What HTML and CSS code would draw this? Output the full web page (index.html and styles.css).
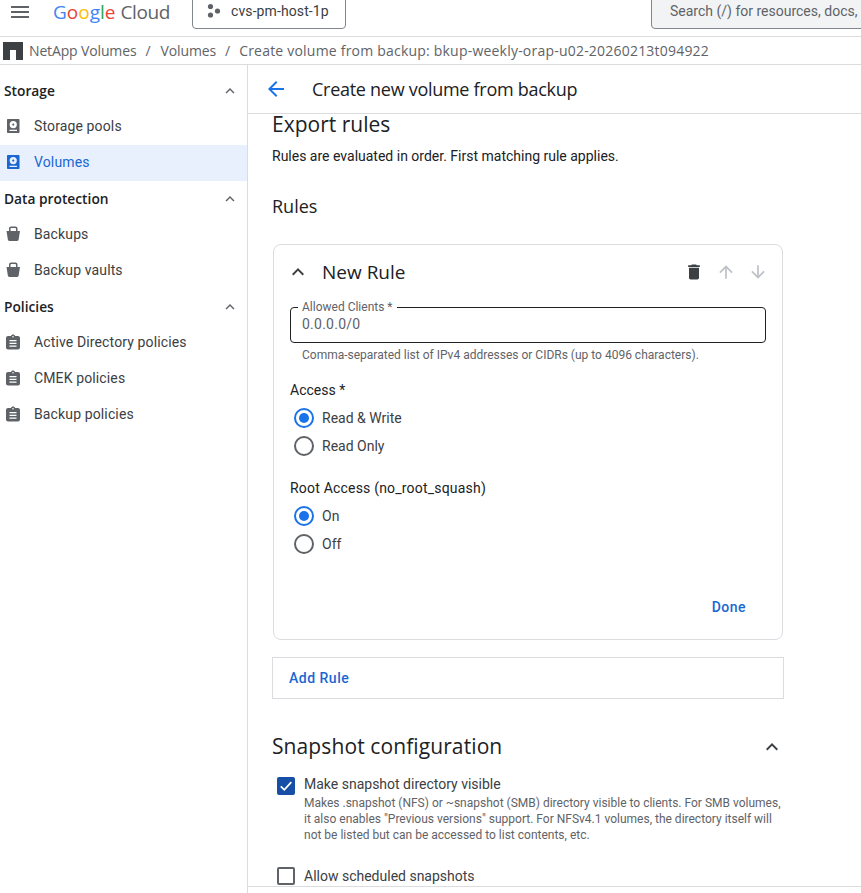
FILE: index.html
```html
<!DOCTYPE html>
<html lang="en">
<head>
<meta charset="utf-8">
<title>Create new volume from backup</title>
<link rel="stylesheet" href="styles.css">
</head>
<body>
<header class="topbar">
  <svg class="menu-icon" viewBox="0 0 24 24" width="24" height="24"><path d="M3 18h18v-2H3v2zm0-5h18v-2H3v2zm0-7v2h18V6H3z"/></svg>
  <div class="logo"><span class="g-blue">G</span><span class="g-red">o</span><span class="g-yellow">o</span><span class="g-blue">g</span><span class="g-green">l</span><span class="g-red">e</span><span class="logo-cloud">Cloud</span></div>
  <div class="project">
    <svg viewBox="0 0 16 16" width="16" height="16"><circle cx="4.500" cy="3.500" r="2.600"/><circle cx="4.500" cy="12" r="2.600"/><circle cx="11.500" cy="8" r="2.600"/></svg>
    <span>cvs-pm-host-1p</span>
  </div>
  <div class="search">Search (/) for resources, docs,</div>
</header>
<nav class="crumbs">
  <svg class="netapp" viewBox="0 0 20 18" width="20" height="18"><path d="M0 0h20v18h-7V8H7v10H0z"/></svg>
  <span class="crumb">NetApp Volumes</span><span class="sep">/</span><span class="crumb">Volumes</span><span class="sep">/</span><span class="crumb-long">Create volume from backup: bkup-weekly-orap-u02-20260213t094922</span>
</nav>
<div class="layout">
  <aside class="sidebar">
    <div class="group"><span>Storage</span><svg class="chev" viewBox="0 0 24 24" width="18" height="18"><path d="M7.400 15.400 12 10.800l4.600 4.600L18 14l-6-6-6 6z"/></svg></div>
    <a class="item"><svg class="ico" viewBox="0 0 18 18" width="18" height="18"><path fill-rule="evenodd" d="M3.800 2h10.900a.8.800 0 0 1 .8.800v12.400a.8.800 0 0 1-.8.800H3.800a.8.800 0 0 1-.8-.800V2.800a.8.800 0 0 1 .8-.800zM9.250 4a3.600 3.600 0 1 0 0 7.200 3.600 3.600 0 0 0 0-7.200zm0 2.500a1.100 1.100 0 1 1 0 2.200 1.100 1.100 0 0 1 0-2.200zM5.500 12.800V14h7.500v-1.200z"/></svg><span>Storage pools</span></a>
    <a class="item active"><svg class="ico" viewBox="0 0 18 18" width="18" height="18"><path fill-rule="evenodd" d="M3.800 2h10.900a.8.800 0 0 1 .8.800v12.400a.8.800 0 0 1-.8.800H3.800a.8.800 0 0 1-.8-.800V2.800a.8.800 0 0 1 .8-.800zM9.250 4a3.600 3.600 0 1 0 0 7.200 3.600 3.600 0 0 0 0-7.200zm0 2.500a1.100 1.100 0 1 1 0 2.200 1.100 1.100 0 0 1 0-2.200zM5.500 12.800V14h7.500v-1.200z"/></svg><span>Volumes</span></a>
    <div class="group"><span>Data protection</span><svg class="chev" viewBox="0 0 24 24" width="18" height="18"><path d="M7.400 15.400 12 10.800l4.600 4.600L18 14l-6-6-6 6z"/></svg></div>
    <a class="item"><svg class="ico" viewBox="0 0 18 18" width="18" height="18"><path fill-rule="evenodd" d="M5 6V3.500C5 2.400 5.900 1.500 7 1.500h4.500c1.100 0 2 .9 2 2V6H16l-1.400 8.800c-.1.700-.7 1.200-1.400 1.200H5.300c-.7 0-1.300-.5-1.400-1.200L2.500 6zm1.500 0h5.500V3.800c0-.5-.3-.8-.8-.8H7.300c-.5 0-.8.300-.8.800z"/></svg><span>Backups</span></a>
    <a class="item"><svg class="ico" viewBox="0 0 18 18" width="18" height="18"><path fill-rule="evenodd" d="M5 6V3.500C5 2.400 5.900 1.500 7 1.500h4.500c1.100 0 2 .9 2 2V6H16l-1.400 8.800c-.1.700-.7 1.200-1.400 1.200H5.300c-.7 0-1.300-.5-1.400-1.200L2.500 6zm1.500 0h5.500V3.800c0-.5-.3-.8-.8-.8H7.300c-.5 0-.8.300-.8.800z"/></svg><span>Backup vaults</span></a>
    <div class="group"><span>Policies</span><svg class="chev" viewBox="0 0 24 24" width="18" height="18"><path d="M7.400 15.400 12 10.800l4.600 4.600L18 14l-6-6-6 6z"/></svg></div>
    <a class="item"><svg class="ico" viewBox="0 0 18 18" width="18" height="18"><path fill-rule="evenodd" d="M4 3h3C7.300 2 8 1.500 9 1.500s1.700.5 2 1.500h3c1.100 0 2 .9 2 2v9.500c0 1.100-.9 2-2 2H4c-1.100 0-2-.9-2-2V5c0-1.100.9-2 2-2zm5 0a.8.800 0 1 0 0 1.600A.8.800 0 0 0 9 3zM5.500 7v1.200h7V7zm0 2.800V11h7V9.800zm0 2.800v1.200h7v-1.200z"/></svg><span>Active Directory policies</span></a>
    <a class="item"><svg class="ico" viewBox="0 0 18 18" width="18" height="18"><path fill-rule="evenodd" d="M4 3h3C7.300 2 8 1.500 9 1.500s1.700.5 2 1.500h3c1.100 0 2 .9 2 2v9.500c0 1.100-.9 2-2 2H4c-1.100 0-2-.9-2-2V5c0-1.100.9-2 2-2zm5 0a.8.800 0 1 0 0 1.600A.8.800 0 0 0 9 3zM5.500 7v1.200h7V7zm0 2.800V11h7V9.800zm0 2.800v1.200h7v-1.200z"/></svg><span>CMEK policies</span></a>
    <a class="item"><svg class="ico" viewBox="0 0 18 18" width="18" height="18"><path fill-rule="evenodd" d="M4 3h3C7.300 2 8 1.500 9 1.500s1.700.5 2 1.500h3c1.100 0 2 .9 2 2v9.500c0 1.100-.9 2-2 2H4c-1.100 0-2-.9-2-2V5c0-1.100.9-2 2-2zm5 0a.8.800 0 1 0 0 1.600A.8.800 0 0 0 9 3zM5.500 7v1.200h7V7zm0 2.800V11h7V9.800zm0 2.800v1.200h7v-1.200z"/></svg><span>Backup policies</span></a>
  </aside>
  <main class="main">
    <div class="page-head">
      <svg class="back" viewBox="0 0 24 24" width="24" height="24"><path d="M20 11H7.830l5.590-5.590L12 4l-8 8 8 8 1.410-1.410L7.830 13H20v-2z"/></svg>
      <h1>Create new volume from backup</h1>
    </div>
    <div class="scroll">
      <h2 class="export-title">Export rules</h2>
      <p class="intro">Rules are evaluated in order. First matching rule applies.</p>
      <h2 class="rules-title">Rules</h2>
      <section class="card">
        <div class="card-head">
          <svg class="card-chev" viewBox="0 0 24 24" width="24" height="24"><path d="M7.410 15.410 12 10.830l4.590 4.580L18 14l-6-6-6 6z"/></svg>
          <h3>New Rule</h3>
          <div class="card-actions">
            <svg class="trash" viewBox="0 0 24 24" width="20" height="20"><path d="M6 19c0 1.100.9 2 2 2h8c1.100 0 2-.9 2-2V7H6v12zM19 4h-3.500l-1-1h-5l-1 1H5v2h14V4z"/></svg>
            <svg class="arrow" viewBox="0 0 24 24" width="20" height="20"><path d="M4 12l1.410 1.410L11 7.830V20h2V7.830l5.580 5.590L20 12l-8-8-8 8z"/></svg>
            <svg class="arrow" viewBox="0 0 24 24" width="20" height="20"><path d="M20 12l-1.410-1.410L13 16.170V4h-2v12.170l-5.580-5.590L4 12l8 8 8-8z"/></svg>
          </div>
        </div>
        <div class="field">
          <label class="field-label">Allowed Clients *</label>
          <span class="field-value">0.0.0.0/0</span>
        </div>
        <p class="hint">Comma-separated list of IPv4 addresses or CIDRs (up to 4096 characters).</p>
        <div class="legend legend-access">Access *</div>
        <div class="radio on"><i></i><span>Read &amp; Write</span></div>
        <div class="radio"><i></i><span>Read Only</span></div>
        <div class="legend legend-root">Root Access (no_root_squash)</div>
        <div class="radio on"><i></i><span>On</span></div>
        <div class="radio"><i></i><span>Off</span></div>
        <div class="card-foot"><span class="link">Done</span></div>
      </section>
      <div class="add-rule"><span class="link">Add Rule</span></div>
      <div class="snap-head">
        <h2>Snapshot configuration</h2>
        <svg viewBox="0 0 24 24" width="24" height="24"><path d="M7.410 15.410 12 10.830l4.590 4.580L18 14l-6-6-6 6z"/></svg>
      </div>
      <div class="check checked">
        <i><svg viewBox="0 0 18 18" width="18" height="18"><path d="M3.800 9.300 7.300 12.800 14.300 5.200" fill="none" stroke="#fff" stroke-width="1.800"/></svg></i>
        <div>
          <div class="check-label">Make snapshot directory visible</div>
          <p class="check-desc">Makes .snapshot (NFS) or ~snapshot (SMB) directory visible to clients. For SMB volumes, it also enables "Previous versions" support. For NFSv4.1 volumes, the directory itself will not be listed but can be accessed to list contents, etc.</p>
        </div>
      </div>
      <div class="check unchecked">
        <i></i>
        <div><div class="check-label">Allow scheduled snapshots</div></div>
      </div>
    </div>
    <div class="main-foot"></div>
  </main>
</div>
</body>
</html>
```
FILE: styles.css
```css
* { box-sizing: border-box; }
html, body { margin: 0; padding: 0; height: 100%; }
body {
  width: 861px;
  height: 893px;
  overflow: hidden;
  background: #fff;
  color: #202124;
  font-family: Roboto, "Liberation Sans", sans-serif;
  font-size: 14px;
  display: flex;
  flex-direction: column;
}
h1, h2, h3, p { margin: 0; font-weight: 400; }

.topbar {
  height: 37px;
  flex: none;
  display: flex;
  align-items: flex-end;
  border-bottom: 1px solid #dadce0;
  overflow: hidden;
  position: relative;
}
.menu-icon { fill: #5f6368; position: absolute; left: 8px; top: 0; }
.logo {
  position: absolute;
  left: 53px;
  top: 0;
  font-family: "Open Sans", Roboto, sans-serif;
  font-size: 19px;
  line-height: 24px;
  white-space: nowrap;
}
.g-blue { color: #4285f4; }
.g-red { color: #ea4335; }
.g-yellow { color: #fbbc04; }
.g-green { color: #34a853; }
.logo-cloud { color: #5f6368; margin-left: 5px; letter-spacing: -0.4px; }
.project {
  margin-left: 192px;
  margin-bottom: 7px;
  width: 154px;
  height: 40px;
  border: 1px solid #80868b;
  border-radius: 4px;
  display: flex;
  align-items: center;
  padding: 4px 0 0 13px;
  gap: 9px;
  color: #3c4043;
  flex: none;
  letter-spacing: 0.1px;
}
.project svg { fill: #5f6368; flex: none; }
.search {
  margin-left: 305px;
  margin-bottom: 7px;
  width: 500px;
  height: 40px;
  flex: none;
  background: #f1f3f4;
  border: 1px solid #80868b;
  border-radius: 4px;
  padding: 11px 0 0 18px;
  color: #5f6368;
  white-space: nowrap;
  line-height: 20px;
  font-size: 14px;
}

.crumbs {
  height: 28px;
  flex: none;
  display: flex;
  align-items: center;
  padding-left: 3px;
  border-bottom: 1px solid #dadce0;
  color: #5f6368;
  font-size: 14px;
  font-family: "Open Sans", Roboto, sans-serif;
  white-space: nowrap;
}
.netapp { fill: #3c4043; margin-right: 6px; flex: none; }
.crumb { letter-spacing: -0.14px; }
.crumb-long { letter-spacing: 0.21px; margin-left: -1px; }
.sep { margin: 0 10px 0 9px; }

.layout { flex: 1; display: flex; min-height: 0; }

.sidebar {
  width: 248px;
  flex: none;
  border-right: 1px solid #dadce0;
  padding-top: 8px;
}
.group {
  height: 36px;
  display: flex;
  align-items: center;
  justify-content: space-between;
  padding: 0 8px 0 4px;
  font-family: "Open Sans", Roboto, sans-serif;
  font-weight: 600;
  color: #202124;
  font-size: 13.750px;
}
.group span { padding-bottom: 2px; }
.chev { fill: #5f6368; }
.item {
  height: 36px;
  display: flex;
  align-items: center;
  padding: 0 0 2px 4px;
  gap: 12px;
  color: #3c4043;
  letter-spacing: 0.13px;
}
.ico { fill: #5f6368; flex: none; }
.item.active { background: #e8f0fe; color: #1967d2; }
.item.active .ico { fill: #1967d2; }

.main { flex: 1; min-width: 0; display: flex; flex-direction: column; }
.page-head {
  height: 49px;
  flex: none;
  display: flex;
  align-items: center;
  padding-left: 16px;
  gap: 24px;
  border-bottom: 1px solid #dadce0;
}
.back { fill: #1a73e8; flex: none; }
h1 {
  font-size: 18px;
  font-family: "Open Sans", Roboto, sans-serif;
  color: #202124;
  letter-spacing: -0.28px;
}

.scroll {
  flex: 1;
  min-height: 0;
  padding-left: 24px;
  width: 560px;
}
.main-foot { height: 7px; flex: none; border-top: 1px solid #dadce0; }

.export-title { font-size: 21px; line-height: 24px; margin-top: -2px; }
.intro { margin-top: 10px; line-height: 20px; }
.rules-title { font-size: 18px; line-height: 24px; margin-top: 28px; }
h2 { font-family: "Open Sans", Roboto, sans-serif; color: #202124; }

.card {
  margin-top: 26px;
  margin-left: 1px;
  width: 510px;
  height: 396px;
  border: 1px solid #dadce0;
  border-radius: 8px;
  padding: 0 16px;
}
.card-head { height: 53px; display: flex; align-items: center; }
.card-chev { fill: #3c4043; flex: none; margin-left: -4px; }
h3 { font-size: 19px; font-family: "Open Sans", Roboto, sans-serif; margin-left: 12px; }
.card-actions { margin: 1px -2px 0 auto; display: flex; gap: 12px; }
.trash { fill: #3c4043; }
.arrow { fill: #bdc1c6; }

.field {
  margin-top: 9px;
  height: 36px;
  border: 1.500px solid #202124;
  border-radius: 4px;
  position: relative;
  padding: 7px 0 0 11px;
  line-height: 18px;
}
.field-label {
  position: absolute;
  left: 7px;
  top: -9px;
  padding: 0 4px;
  background: #fff;
  font-size: 12px;
  line-height: 16px;
  color: #5f6368;
}
.field-value { color: #5f6368; letter-spacing: 0.25px; }
.hint { font-size: 12px; color: #5f6368; line-height: 16px; margin: 4px 0 0 12px; }
.legend { line-height: 20px; color: #202124; }
.legend-access { margin-top: 17px; }
.legend-root { margin-top: 18px; letter-spacing: 0.2px; }
.radio { height: 28px; display: flex; align-items: center; gap: 8px; margin-left: 4px; color: #3c4043; }
.legend + .radio { margin-top: 4px; }
.radio i {
  width: 20px;
  height: 20px;
  border: 2px solid #5f6368;
  border-radius: 50%;
  flex: none;
  position: relative;
}
.radio.on i { border-color: #1a73e8; }
.radio.on i::after {
  content: "";
  position: absolute;
  inset: 3px;
  border-radius: 50%;
  background: #1a73e8;
}
.card-foot { display: flex; justify-content: flex-end; margin-top: 39px; padding-right: 20px; line-height: 20px; }
.link { color: #1967d2; font-weight: 500; letter-spacing: 0.5px; }

.add-rule {
  margin-top: 17px;
  width: 512px;
  height: 42px;
  border: 1px solid #dadce0;
  display: flex;
  align-items: center;
  padding-left: 16px;
}
.snap-head {
  margin-top: 30px;
  width: 512px;
  display: flex;
  align-items: center;
  justify-content: space-between;
  height: 36px;
}
.snap-head h2 { font-size: 21px; letter-spacing: 0.1px; padding-bottom: 2px; }
.snap-head svg { fill: #3c4043; flex: none; }

.check { display: flex; gap: 9px; margin-left: 5px; width: 510px; }
.checked { margin-top: 9px; }
.unchecked { margin-top: 24px; }
.check > i {
  width: 18px;
  height: 18px;
  flex: none;
  border-radius: 2px;
  display: block;
}
.checked > i { margin-top: 3px; background: #174ea6; }
.unchecked > i { border: 2px solid #5f6368; }
.check-label { line-height: 20px; color: #3c4043; }
.unchecked .check-label { line-height: 18px; }
.check-desc { margin-top: 1px; font-size: 12px; line-height: 16px; color: #5f6368; }
```
